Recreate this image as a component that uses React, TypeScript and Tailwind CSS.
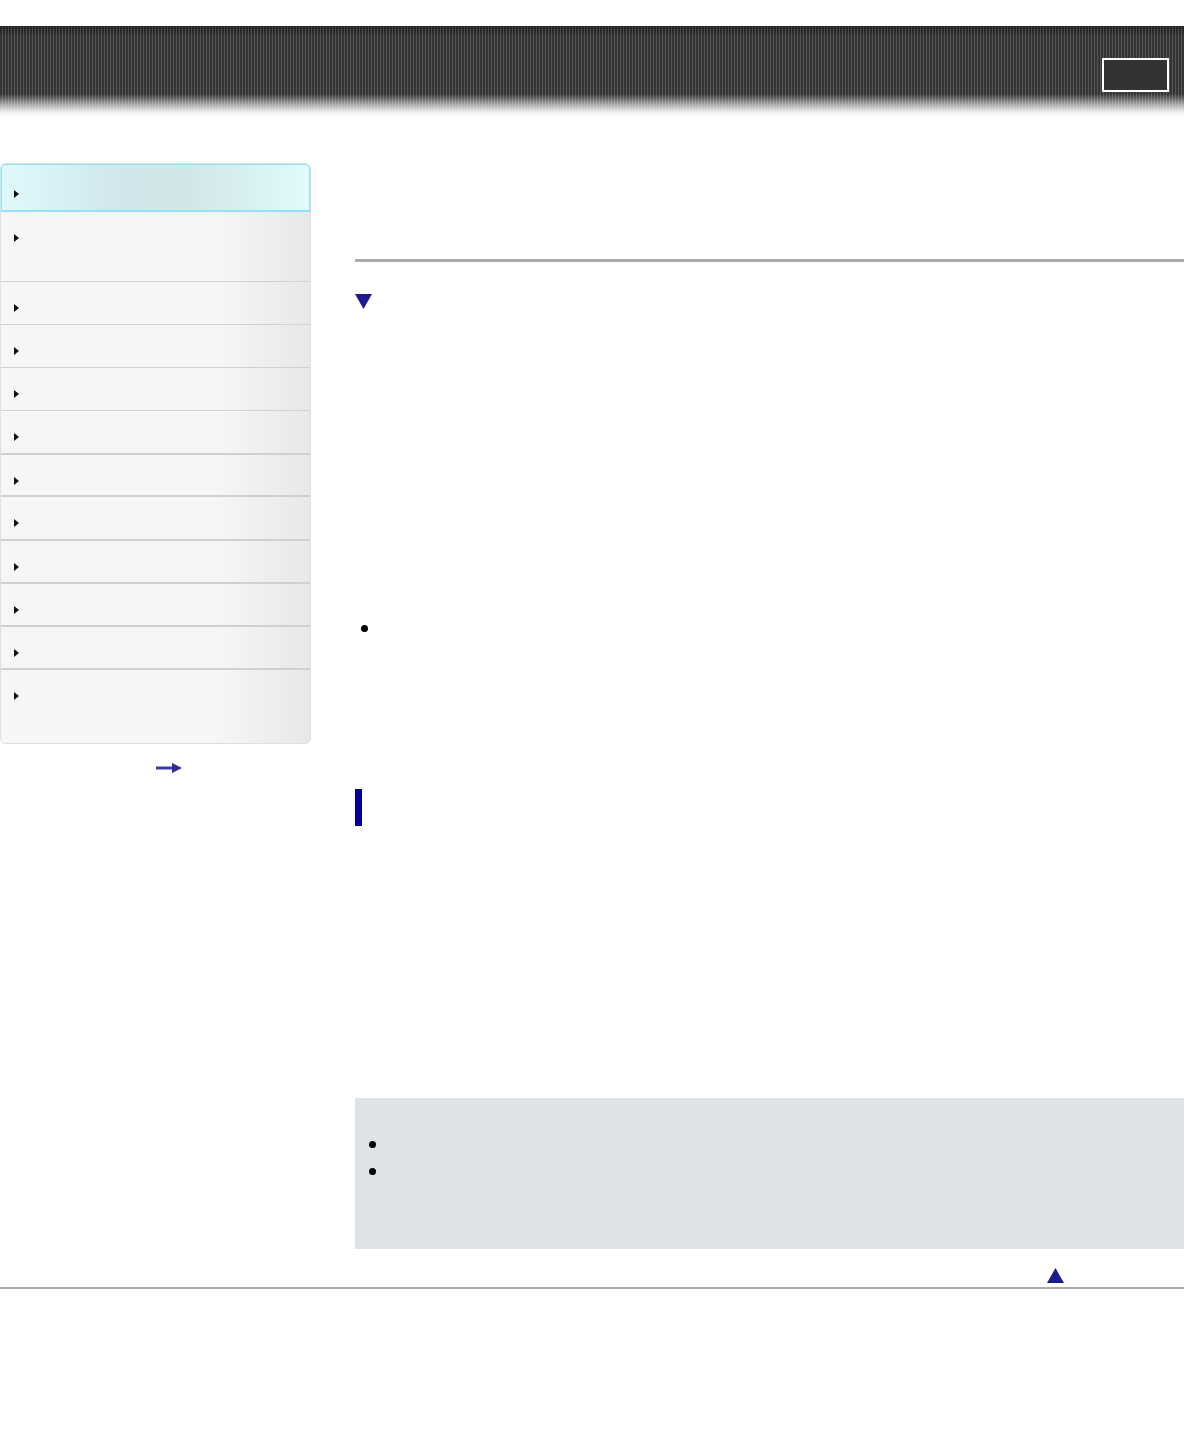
import React from 'react';

const rows = [
  { h: 'h-[69px]', heavy: false },
  { h: 'h-[43px]', heavy: false },
  { h: 'h-[43px]', heavy: false },
  { h: 'h-[43px]', heavy: false },
  { h: 'h-[43px]', heavy: false },
  { h: 'h-[42px]', heavy: true },
  { h: 'h-[44px]', heavy: true },
  { h: 'h-[43px]', heavy: true },
  { h: 'h-[43px]', heavy: true },
  { h: 'h-[43px]', heavy: true },
  { h: 'h-[75px]', heavy: true },
];

function Caret() {
  return (
    <svg width="5" height="8" viewBox="0 0 5 8" className="shrink-0">
      <path d="M0 0 L5 4 L0 8 Z" fill="#111" />
    </svg>
  );
}

function Triangle({ up }: { up?: boolean }) {
  return (
    <svg width="17" height="15" viewBox="0 0 17 15">
      <path d={up ? 'M8.5 0 L17 15 L0 15 Z' : 'M0 0 L17 0 L8.5 15 Z'} fill="#1c1c8e" />
    </svg>
  );
}

export default function App() {
  return (
    <div className="min-h-[1440px] bg-white font-['Liberation_Sans',Arial,sans-serif]">
      <div className="h-[26px]" />
      <header className="relative h-[90px] bg-[linear-gradient(to_bottom,rgba(0,0,0,0.35)_0px,rgba(0,0,0,0)_10px,rgba(0,0,0,0)_68px,rgba(255,255,255,0.6)_79px,rgba(238,238,238,1)_86px,rgba(255,255,255,1)_90px),repeating-linear-gradient(to_right,#353535_0px,#353535_2px,#555555_2px,#555555_3px)]">
        <div className="absolute left-[1102px] top-[32px] h-[34px] w-[67px] border-2 border-white bg-[#333333]" />
      </header>

      <div className="flex pt-[47px]">
        <aside className="w-[311px] shrink-0">
          <nav className="overflow-hidden rounded-[6px] border border-[#dde0e6] bg-[linear-gradient(to_right,#f6f6f6_0%,#f6f6f6_70%,#e8e8e8_100%)]">
            <div className="-mx-px -mt-px flex h-[49px] items-center rounded-t-[6px] border-2 border-[#8fe2f7] bg-[linear-gradient(to_right,#e0fafc_0%,#d0e6ea_40%,#d2e6e8_60%,#e0fbfc_100%)] pl-[12px] pt-[12px]">
              <Caret />
            </div>
            {rows.map((r, i) => (
              <div
                key={i}
                className={`${r.h} flex items-start pl-[13px] pt-[22px] ${
                  i === 0 ? '' : r.heavy ? 'border-t-2 border-[#d0d0d0]' : 'border-t border-[#d2d2d2]'
                }`}
              >
                <Caret />
              </div>
            ))}
          </nav>
          <div className="flex justify-center pt-[19px] pl-[26px]">
            <svg width="26" height="10" viewBox="0 0 26 10">
              <rect x="0" y="3.5" width="17" height="3" fill="#3a3aa0" />
              <path d="M16 0 L26 5 L16 10 Z" fill="#2a2a98" />
            </svg>
          </div>
        </aside>

        <main className="ml-[44px] flex-1">
          <div className="h-[50px]" />
          <div className="mt-[46px] h-[3px] bg-[#aaaaaa]" />
          <div className="mt-[32px]">
            <Triangle />
          </div>
          <div className="h-[314px]" />
          <ul className="pl-[6px]">
            <li className="flex h-[10px] items-center">
              <span className="h-[7px] w-[7px] rounded-full bg-black" />
            </li>
          </ul>
          <div className="h-[156px]" />
          <div className="h-[37px] w-[7px] bg-[#000099]" />
          <div className="h-[272px]" />
          <div className="h-[151px] bg-[#dfe2e7] pl-[14px] pt-[43px]">
            <div className="flex flex-col gap-[20px]">
              <span className="h-[7px] w-[7px] rounded-full bg-black" />
              <span className="h-[7px] w-[7px] rounded-full bg-black" />
            </div>
          </div>
          <div className="h-[38px] pl-[692px] pt-[19px]">
            <Triangle up />
          </div>
        </main>
      </div>
      <div className="h-[2px] bg-[#aaaaaa]" />
    </div>
  );
}
